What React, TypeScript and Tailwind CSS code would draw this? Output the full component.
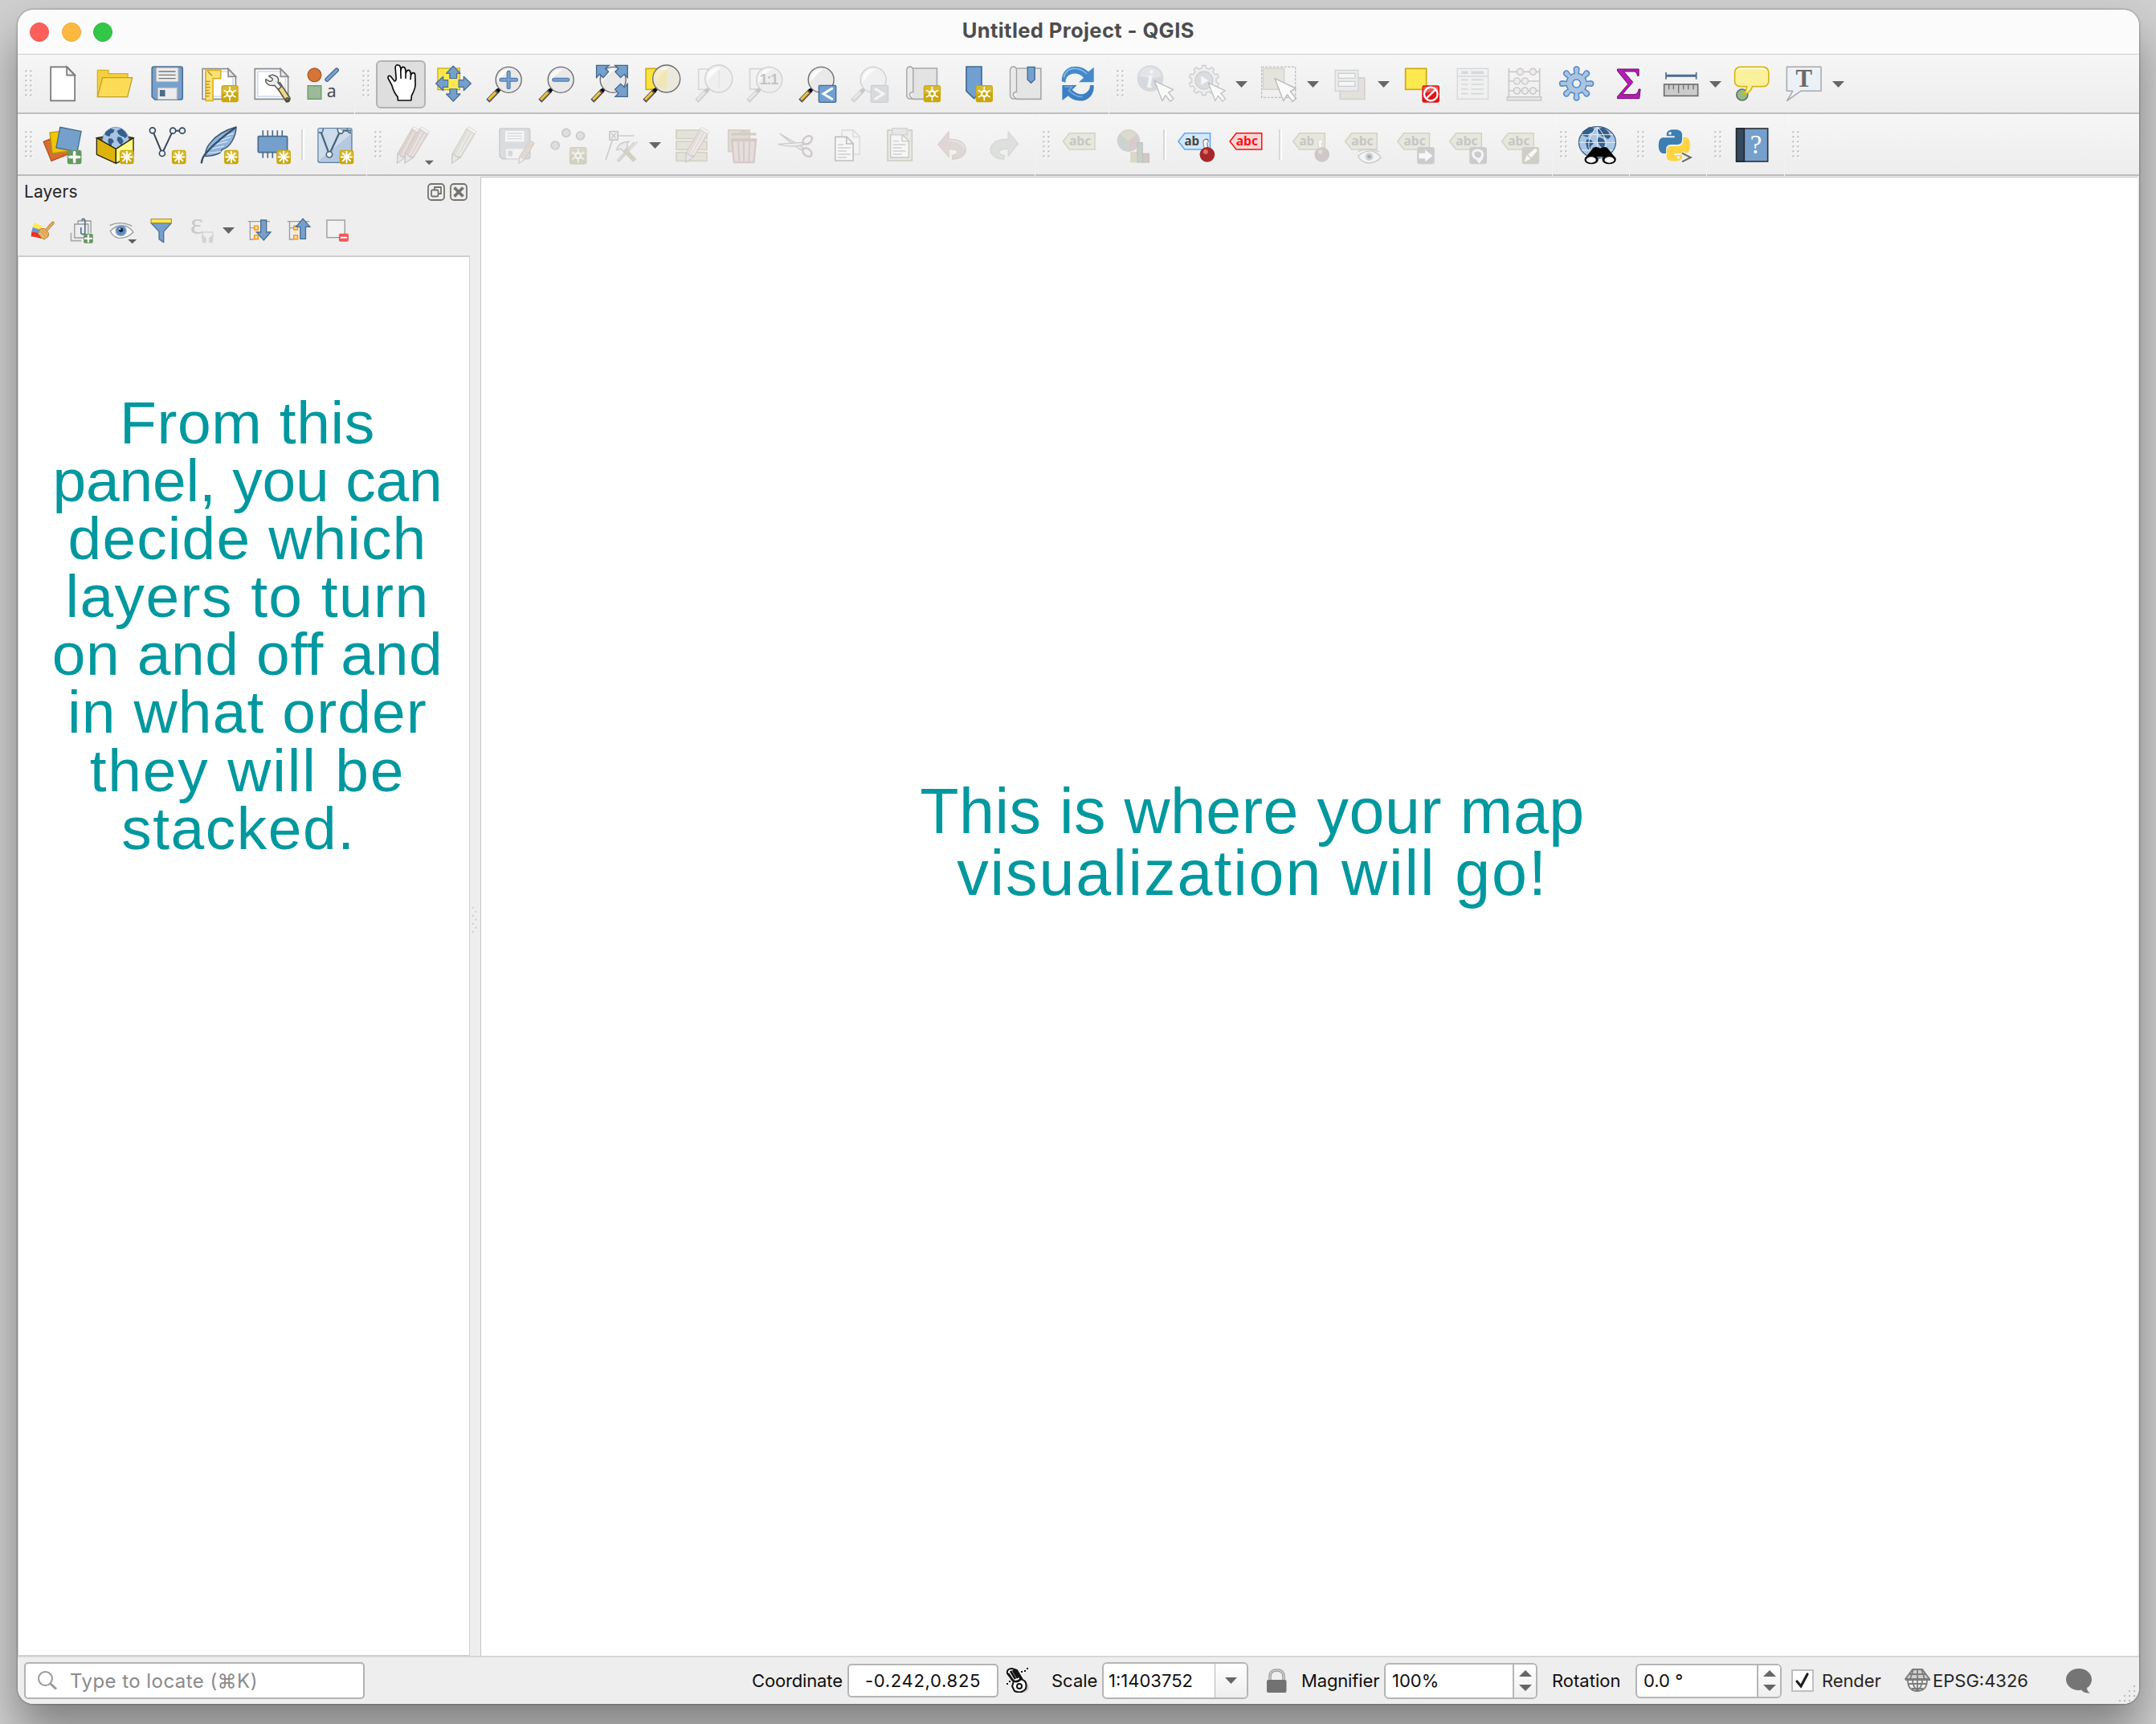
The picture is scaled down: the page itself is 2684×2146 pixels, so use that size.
import React from "react";

type Kids = { children?: React.ReactNode };
type Pt = { x: number; y: number };

/* ---------- icon frames ---------- */

function Icon({ x, y, children }: Pt & Kids) {
  return (
    <svg viewBox={`${x} ${y} 144 144`} className="block h-12 w-12 overflow-visible" fill="none">
      {children}
    </svg>
  );
}

function SmallIcon({ x, children }: { x: number } & Kids) {
  return (
    <svg viewBox={`${x} 814 96 96`} className="block h-8 w-8 overflow-visible" fill="none">
      {children}
    </svg>
  );
}

function Slot({ children }: Kids) {
  return <div className="flex w-[64.8px] shrink-0 items-center justify-center">{children}</div>;
}

function DropArrow() {
  return (
    <div className="flex w-[23.7px] shrink-0 items-center pl-[3.5px]">
      <svg viewBox="0 0 15 8" className="mt-[2px] h-2 w-[15px]">
        <path d="M0 0H15L7.5 8Z" fill="#666" />
      </svg>
    </div>
  );
}

function Grip() {
  const rows = [0, 6, 12, 18, 24, 30];
  return (
    <div className="flex w-[24.1px] shrink-0 items-center pl-[9px]">
      <svg viewBox="0 0 10 34" className="h-[34px] w-[10px]">
        {rows.map((r) => (
          <g key={r}>
            <rect x="1.6" y={r + 1.6} width="2" height="2" fill="#fff" />
            <rect x="7.6" y={r + 1.6} width="2" height="2" fill="#fff" />
            <rect x="0.4" y={r + 0.4} width="2" height="2" fill="#b8b8b8" />
            <rect x="6.4" y={r + 0.4} width="2" height="2" fill="#b8b8b8" />
          </g>
        ))}
      </svg>
    </div>
  );
}

function Divider() {
  return (
    <div className="flex w-[14.2px] shrink-0 items-center justify-center">
      <div className="h-[38px] w-[4px] border-l-2 border-[#d8d8d8] bg-white" />
    </div>
  );
}

function Group({ children, last, edge }: Kids & { last?: boolean; edge: string }) {
  return (
    <div
      className={`flex shrink-0 items-stretch bg-linear-to-b from-[#f6f6f6] to-[#ededed] ${edge} ${last ? "grow" : "mr-px pr-[6.5px]"}`}
    >
      {children}
    </div>
  );
}

/* ---------- shared icon parts ---------- */

function StarBadge({ x, y, s = 53, faded }: Pt & { s?: number; faded?: boolean }) {
  const c = s / 2;
  const r = s * 0.38;
  const big = s > 60;
  const angles = big ? [0, 60, 120] : [0, 45, 90, 135];
  return (
    <g transform={`translate(${x} ${y})`}>
      <rect width={s} height={s} rx="9" fill={faded ? "#d2cfc3" : "#caa70a"} />
      <path d={`M3 ${c}V9a6 6 0 0 1 6-6H${s - 9}a6 6 0 0 1 6 6V${c - 4}Z`} fill={faded ? "#dad8cf" : "#dcc041"} opacity=".7" />
      {angles.map((a) => (
        <path key={a} d={`M${c} ${c - r}V${c + r}`} stroke={faded ? "#f4f4f2" : "#fff"} strokeWidth={big ? 5 : 6} strokeLinecap="round" transform={`rotate(${a} ${c} ${c})`} />
      ))}
      {big && <circle cx={c} cy={c} r="10" fill={faded ? "#d2cfc3" : "#caa70a"} stroke={faded ? "#f4f4f2" : "#fff"} strokeWidth="7" />}
    </g>
  );
}

function PlusBadge({ x, y, s }: Pt & { s: number }) {
  return (
    <g transform={`translate(${x} ${y})`}>
      <rect width={s} height={s} rx={s * 0.16} fill="#64995f" />
      <path d={`M${s / 2} ${s * 0.16}V${s * 0.84}M${s * 0.16} ${s / 2}H${s * 0.84}`} stroke="#fff" strokeWidth={s * 0.2} strokeLinecap="round" />
    </g>
  );
}

function Magnifier({ x, y = 240, faded, cx = 87.5, cy = 58, r = 48, glass = "#e9e9e9" }: { x: number; y?: number; faded?: boolean; cx?: number; cy?: number; r?: number; glass?: string }) {
  return (
    <g transform={`translate(${x} ${y})`}>
      <path d="M10 137L49 97" stroke={faded ? "#cfcfcb" : "#545454"} strokeWidth="17" strokeLinecap="butt" strokeLinejoin="round" />
      <path d="M13 133L40 105" stroke={faded ? "#e6e5df" : "#f6b91a"} strokeWidth="9" />
      <path d="M11 130L37 103" stroke={faded ? "#efeeea" : "#fde08a"} strokeWidth="3" />
      {!faded && <path d="M50 87l9 9-9 10-10-10z" fill="#0b0b0b" />}
      {faded && <path d="M50 87l9 9-9 10-10-10z" fill="#c6c6c6" />}
      <circle cx={cx} cy={cy} r={r} fill={glass} stroke={faded ? "#d0d0d0" : "#6c6c6c"} strokeWidth="4" />
      <path d={`M${cx - r + 9} ${cy + 8}A${r - 9} ${r - 9} 0 0 1 ${cx + 8} ${cy - r + 9}Q${cx - 18} ${cy - 22} ${cx - r + 9} ${cy + 8}Z`} fill="#fff" opacity=".75" />
    </g>
  );
}

function Tag({ x, text = "abc", fill = "#e8e7de", stroke = "#d3d2c6", color = "#c6c6c6", y = 0 }: { x: number; text?: string; fill?: string; stroke?: string; color?: string; y?: number }) {
  return (
    <g transform={`translate(${x} ${y})`}>
      <path d="M2 528L26 497H121V558H26Z" fill={fill} stroke={stroke} strokeWidth="4.5" />
      <text x={text === "abc" ? 66 : 53} y="544" textAnchor="middle" className="font-bold" style={{ fontFamily: '"Noto Sans", sans-serif' }} fontSize="47" textLength={text === "abc" ? 82 : 56} lengthAdjust="spacingAndGlyphs" fill={color}>
        {text}
      </text>
    </g>
  );
}

function Cursor({ x, y, k = 1 }: Pt & { k?: number }) {
  return (
    <path transform={`translate(${x} ${y}) scale(${k})`} d="M0 0L70 33L52 43L71 67L59 77L41 54L29 75Z" fill="#fafafa" stroke="#bdbdbd" strokeWidth="4" strokeLinejoin="round" />
  );
}

function Pencil({ x, y, tone, tip = "#c3c3c3" }: Pt & { tone: string; tip?: string }) {
  return (
    <g transform={`translate(${x} ${y})`}>
      <path d="M2 136L5 98L58 6L90 24L36 113Z" fill={tone} stroke="#cfccc9" strokeWidth="3" />
      <path d="M2 136L5 98L20 112L36 113Z" fill="#e6e6e6" stroke={tip} strokeWidth="3" strokeLinejoin="round" />
      <path d="M20 106L66 18M30 108L78 26" stroke="#fff" strokeWidth="4" opacity=".5" />
      <path d="M58 6L65 0L93 17L90 27Z" fill="#f8f8f8" stroke="#d6d6d6" strokeWidth="3" />
    </g>
  );
}

function Page({ x }: { x: number }) {
  return (
    <g>
      <path d={`M${x} 257H${x + 96}L${x + 124} 285V370H${x}Z`} fill="#fff" stroke="#8c8c8c" strokeWidth="5" />
      <path d={`M${x + 10} 267H${x + 96}M${x + 114} 292V360H${x + 10}V267`} stroke="#c9d9f3" strokeWidth="5" />
      <path d={`M${x + 96} 257V286H${x + 124}Z`} fill="#e9e9e9" stroke="#8c8c8c" strokeWidth="5" />
    </g>
  );
}

function Land({ x, y, k, color }: Pt & { k: number; color: string }) {
  return (
    <g transform={`translate(${x} ${y}) scale(${k})`} fill={color}>
      <path d="M-36 -22L-18 -34L-4 -30L-8 -20L-18 -16L-22 -6L-30 -8L-38 -12Z" />
      <path d="M-24 0L-12 2L-6 12L-14 20L-16 34L-24 24L-28 10Z" />
      <path d="M4 -26L20 -34L34 -22L42 -8L34 0L26 -6L18 -8L10 -14Z" />
      <path d="M8 -6L20 -2L28 10L20 26L12 18L4 6Z" />
    </g>
  );
}

/* ---------- first toolbar ---------- */

function FileGroup() {
  return (
    <>
      <Grip />
      <Slot>
        <Icon x={163.5} y={240}>
          <path d="M191 250H252L281 280V376H191Z" fill="#fff" stroke="#757575" strokeWidth="5" />
          <path d="M251 250V281H281Z" fill="#ececec" stroke="#757575" strokeWidth="5" />
        </Icon>
      </Slot>
      <Slot>
        <Icon x={357.9} y={240}>
          <path d="M365 362V262H406V275H478V300" fill="#f5cf3f" stroke="#d3af2b" strokeWidth="4" />
          <path d="M365 362L384 290H495L477 362Z" fill="#fcdc57" stroke="#bf9f27" strokeWidth="4" strokeLinejoin="round" />
        </Icon>
      </Slot>
      <Slot>
        <Icon x={552.3} y={240}>
          <path d="M576 249H675Q682 249 682 256V366Q682 372 675 372H579L568 361V256Q568 249 576 249Z" fill="#76a1cd" stroke="#4d6f94" strokeWidth="5" />
          <rect x="584" y="253" width="82" height="52" rx="4" fill="#ececec" stroke="#bdbdbd" strokeWidth="3" />
          <path d="M593 267H656M593 280H656M593 293H656" stroke="#777" strokeWidth="4" />
          <rect x="590" y="328" width="71" height="43" fill="#ececec" stroke="#bdbdbd" strokeWidth="3" />
          <rect x="597" y="336" width="20" height="24" fill="#4c6b8d" />
        </Icon>
      </Slot>
      <Slot>
        <Icon x={746.7} y={240}>
          <Page x={756} />
          <path d="M768 262H824V293H795V376H768Z" fill="#fbe27a" stroke="#dcb21c" strokeWidth="5" />
          <path d="M768 304H785M768 315H781M768 326H785M768 337H781M768 348H785M768 359H781M775 266L792 283" stroke="#b78f0e" strokeWidth="4" />
          <StarBadge x={826} y={318} s={64} />
        </Icon>
      </Slot>
      <Slot>
        <Icon x={941.1} y={240}>
          <Page x={951} />
          <path d="M1028 318L1044 308L1082 366Q1083 380 1069 381Z" fill="#f0d788" stroke="#5b5748" strokeWidth="5" strokeLinejoin="round" />
          <path d="M1003 284Q1020 274 1035 288Q1042 297 1037 308L1050 324L1038 334L1024 319Q1003 323 993 308Q990 302 992 296L1006 304Q1018 304 1017 294Z" fill="#eee" stroke="#5a5a5a" strokeWidth="4.5" strokeLinejoin="round" />
          <circle cx="1072" cy="371" r="6" fill="#777" stroke="#222" strokeWidth="3" />
        </Icon>
      </Slot>
      <Slot>
        <Icon x={1135.5} y={240}>
          <circle cx="1176" cy="280" r="25" fill="#d87438" stroke="#ad5a27" strokeWidth="4" />
          <path d="M1223 297L1259 262" stroke="#476c93" strokeWidth="17" strokeLinecap="round" />
          <path d="M1223 297L1259 262" stroke="#7aa4d0" strokeWidth="9" strokeLinecap="round" />
          <rect x="1151" y="320" width="50" height="50" fill="#9cb99a" stroke="#659b62" strokeWidth="4" />
          <text x="1222" y="363" fontSize="64" style={{ fontFamily: '"Noto Sans", sans-serif' }} fill="#4a4a4a">a</text>
        </Icon>
      </Slot>
    </>
  );
}

const arrow = "M0 0L26 27H13V46H-13V27H-26Z";

function NavGroup() {
  return (
    <>
      <Grip />
      <Slot>
        <div className="mt-[2px] flex h-[60px] w-[62px] items-center justify-center rounded-[6px] border-2 border-[#b3b3b3] bg-[#dedede]">
          <Icon x={104.7} y={243}>
            <path d="M166 375L165 362Q150 345 143 318L129 292Q128 280 138 284L153 303Q160 303 159 290L156 252Q158 240 166 243Q173 243 175 251L177 262Q178 250 186 250Q194 251 194 262L196 272Q198 261 206 262Q213 264 213 274L214 282Q217 271 224 272Q231 274 230 284L231 318Q229 335 217 357L215 375Z" fill="#fff" stroke="#0c0c0c" strokeWidth="5" strokeLinejoin="round" />
            <path d="M176 260L177 292M195 270L195 292M214 282L213 296" stroke="#0c0c0c" strokeWidth="5" strokeLinecap="round" />
          </Icon>
        </div>
      </Slot>
      <Slot>
        <Icon x={299.1} y={240}>
          <rect x="314" y="255" width="82" height="80" fill="#fce94f" stroke="#d0aa12" strokeWidth="4" />
          <g fill="#76a0cc" stroke="#4a6e94" strokeWidth="4" strokeLinejoin="round">
            <path transform="translate(372 247)" d={arrow} />
            <path transform="translate(372 378) rotate(180)" d={arrow} />
            <path transform="translate(307 312) rotate(-90)" d={arrow} />
            <path transform="translate(438 312) rotate(90)" d={arrow} />
          </g>
          <path d="M354 295h36v36h-36z" fill="#fce94f" />
        </Icon>
      </Slot>
      <Slot>
        <Icon x={493.5} y={240}>
          <Magnifier x={493.5} />
          <path d="M581 270V326M553 298H609" stroke="#4c77a6" strokeWidth="15" strokeLinecap="round" />
          <path d="M581 270V326M553 298H609" stroke="#74a1d1" strokeWidth="9" strokeLinecap="round" />
        </Icon>
      </Slot>
      <Slot>
        <Icon x={687.9} y={240}>
          <Magnifier x={687.9} />
          <path d="M750 298H801" stroke="#4c77a6" strokeWidth="15" strokeLinecap="round" />
          <path d="M750 298H801" stroke="#74a1d1" strokeWidth="9" strokeLinecap="round" />
        </Icon>
      </Slot>
      <Slot>
        <Icon x={882.3} y={240}>
          <Magnifier x={882.3} />
          <g fill="#76a0cc" stroke="#41678f" strokeWidth="4" strokeLinejoin="miter">
            <path d="M908 244H955L941 256L953 268L933 290L920 277L908 290Z" />
            <path d="M1024 244V290L1012 277L998 290L978 268L990 256L977 244Z" />
            <path d="M1024 361H978L990 348L977 334L998 313L1012 326L1024 313Z" />
          </g>
        </Icon>
      </Slot>
      <Slot>
        <Icon x={1076.7} y={240}>
          <rect x="1092" y="256" width="80" height="78" fill="#fbe33c" stroke="#d3ac0d" strokeWidth="5" />
          <Magnifier x={1076.7} cx={92} cy={54} r={51} glass="#ebe9dc" />
          <path d="M1140 260H1172V330L1150 332Q1128 320 1124 294Q1126 272 1140 260Z" fill="#f2e69f" opacity=".6" />
        </Icon>
      </Slot>
      <Slot>
        <Icon x={-48.9} y={240}>
          <rect x="-32" y="258" width="78" height="76" stroke="#d8d8d8" strokeWidth="5" />
          <Magnifier x={-48.9} cx={92} cy={54} r={51} faded glass="#efefef" />
          <path d="M45 262V328" stroke="#e2e2e2" strokeWidth="4" />
        </Icon>
      </Slot>
      <Slot>
        <Icon x={145.5} y={240}>
          <rect x="162" y="257" width="80" height="76" stroke="#d4d4d4" strokeWidth="5" />
          <Magnifier x={145.5} cx={89} faded glass="#eeeeee" />
          <text x="234" y="316" textAnchor="middle" fontSize="54" className="font-bold" style={{ fontFamily: '"Liberation Sans", sans-serif' }} textLength="70" fill="#c2c2c2">1:1</text>
        </Icon>
      </Slot>
      <Slot>
        <Icon x={339.9} y={240}>
          <Magnifier x={339.9} />
          <rect x="419" y="319" width="64" height="63" rx="4" fill="#709fd0" stroke="#436a94" strokeWidth="4" />
          <path d="M468 331L436 350L468 370" stroke="#fff" strokeWidth="9" strokeLinecap="round" />
        </Icon>
      </Slot>
      <Slot>
        <Icon x={534.3} y={240}>
          <Magnifier x={534.3} faded glass="#f0f0f0" />
          <rect x="613" y="319" width="64" height="63" rx="4" fill="#d8dbde" stroke="#cccfd2" strokeWidth="4" />
          <path d="M630 332L660 350L630 369" stroke="#f5f5f5" strokeWidth="9" strokeLinecap="round" />
        </Icon>
      </Slot>
      <Slot>
        <Icon x={728.7} y={240}>
          <path d="M768 255H859V370H768" fill="#e3e3e3" stroke="#a9a9a9" strokeWidth="5" />
          <path d="M746 262Q747 249 758 249Q769 249 770 262V344Q759 342 757 353Q757 360 768 369Q748 372 746 358Z" fill="#e9e9e9" stroke="#a3a3a3" strokeWidth="4" />
          <StarBadge x={809} y={318} s={64} />
        </Icon>
      </Slot>
      <Slot>
        <Icon x={923.1} y={240}>
          <path d="M968 249H1025V340L997 368L968 340Z" fill="#709fd0" stroke="#3f6a97" strokeWidth="5" />
          <StarBadge x={1003} y={318} s={64} />
        </Icon>
      </Slot>
      <Slot>
        <Icon x={1117.5} y={240}>
          <path d="M1158 255H1249V370H1158" fill="#e5e5e5" stroke="#a9a9a9" strokeWidth="5" />
          <path d="M1134 262Q1136 249 1146 249Q1157 249 1158 262V344Q1147 342 1145 353Q1145 360 1158 369Q1136 372 1134 358Z" fill="#e9e9e9" stroke="#a3a3a3" strokeWidth="4" />
          <path d="M1199 250H1226V297L1212 310L1199 297Z" fill="#74a0cf" stroke="#45698f" strokeWidth="4" />
        </Icon>
      </Slot>
      <Slot>
        <Icon x={1311.9} y={240}>
          <path d="M1326 304Q1325 263 1362 250Q1400 243 1426 268L1446 251V307H1390L1408 290Q1386 269 1362 277Q1340 284 1340 308Z" fill="#4389cc" />
          <path d="M1334 289Q1338 262 1368 256Q1396 253 1420 276" stroke="#8fbbe4" strokeWidth="5" />
          <path d="M1446 318Q1448 361 1411 375Q1374 382 1350 358L1328 375V318H1383L1365 335Q1388 357 1410 350Q1432 341 1432 318Z" fill="#3a7fc3" />
          <path d="M1336 324H1364L1352 338Q1376 362 1404 362" stroke="#76abdd" strokeWidth="5" />
        </Icon>
      </Slot>
    </>
  );
}

function GearShape({ cx, cy, r, n, tooth, fill, stroke, w }: { cx: number; cy: number; r: number; n: number; tooth: number; fill: string; stroke: string; w: number }) {
  const pts: string[] = [];
  for (let i = 0; i < n; i++) {
    const a = (i / n) * Math.PI * 2 - Math.PI / 2;
    const d = Math.PI / n;
    const p = (ang: number, rad: number) => `${(cx + Math.cos(ang) * rad).toFixed(1)} ${(cy + Math.sin(ang) * rad).toFixed(1)}`;
    pts.push(p(a - d * 0.55, r), p(a - d * 0.38, r + tooth), p(a + d * 0.38, r + tooth), p(a + d * 0.55, r));
  }
  return <path d={`M${pts.join("L")}Z`} fill={fill} stroke={stroke} strokeWidth={w} strokeLinejoin="round" />;
}

function AttributeGroup() {
  return (
    <>
      <Grip />
      <Slot>
        <Icon x={221.1} y={240}>
          <circle cx="275" cy="293" r="49" fill="#d5d9dd" />
          <path d="M233 283Q240 250 275 250Q310 252 317 284Q276 300 233 283Z" fill="#e2e5e8" />
          <text x="274" y="326" textAnchor="middle" fontSize="92" className="font-bold italic" style={{ fontFamily: '"Liberation Serif", serif' }} fill="#f4f4f4">i</text>
          <Cursor x={291} y={302} />
        </Icon>
      </Slot>
      <Slot>
        <Icon x={415.5} y={240}>
          <GearShape cx={478} cy={300} r={46} n={10} tooth={10} fill="#efefef" stroke="#cbcbcb" w={4} />
          <circle cx="478" cy="300" r="33" fill="#d9dde1" stroke="#cdd0d3" strokeWidth="4" />
          <path d="M467 284V317L495 301Z" fill="#f6f6f6" />
          <Cursor x={494} y={309} k={0.9} />
        </Icon>
      </Slot>
      <DropArrow />
      <Slot>
        <Icon x={681} y={240}>
          <rect x="692" y="250" width="126" height="114" stroke="#bdbdbd" strokeWidth="4" strokeDasharray="9 5" />
          <rect x="697" y="256" width="79" height="78" fill="#e5e3de" stroke="#d4d1c9" strokeWidth="4" />
          <Cursor x={741} y={293} k={1.12} />
        </Icon>
      </Slot>
      <DropArrow />
      <Slot>
        <Icon x={946.5} y={240}>
          <rect x="986" y="291" width="92" height="79" fill="#e3e1dc" stroke="#d4d1c9" strokeWidth="5" />
          <rect x="968" y="262" width="86" height="78" fill="#e9eaeb" stroke="#cfd2d4" strokeWidth="4" />
          <rect x="980" y="274" width="62" height="18" fill="#f6f6f6" stroke="#cccfd1" strokeWidth="4" />
          <rect x="980" y="304" width="62" height="18" fill="#f6f6f6" stroke="#cccfd1" strokeWidth="4" />
        </Icon>
      </Slot>
      <DropArrow />
      <Slot>
        <Icon x={1212} y={240}>
          <rect x="1229" y="256" width="78" height="78" fill="#fce94f" stroke="#cfa80d" strokeWidth="5" />
          <rect x="1291" y="319" width="65" height="64" rx="7" fill="#dc1717" />
          <path d="M1295 349V328Q1295 323 1300 323H1347Q1352 323 1352 328V340Z" fill="#e85b5b" />
          <circle cx="1324" cy="351" r="25" stroke="#fff" strokeWidth="7" />
          <path d="M1307 367L1341 335" stroke="#fff" strokeWidth="7" />
        </Icon>
      </Slot>
      <Slot>
        <Icon x={26.4} y={240}>
          <rect x="42" y="256" width="115" height="114" fill="#f0f0f0" stroke="#d4d8da" strokeWidth="4" />
          <path d="M42 285H157" stroke="#d4d8da" strokeWidth="5" />
          <path d="M57 271H82M94 271H140" stroke="#d6d9db" strokeWidth="11" />
          <path d="M57 298H82M94 298H140M57 315H82M94 315H140M57 333H82M94 333H140M57 350H82M94 350H140" stroke="#d3d6d8" strokeWidth="5" />
        </Icon>
      </Slot>
      <Slot>
        <Icon x={220.8} y={240}>
          <path d="M237 254V362M352 254V362M237 268H352M237 303H352M237 339H352" stroke="#c9c9c9" strokeWidth="5" />
          <rect x="231" y="362" width="127" height="13" fill="#e6e6e6" stroke="#c5c5c5" strokeWidth="4" />
          <g fill="#ececec" strokeWidth="5">
            <g stroke="#d3c8c8"><circle cx="279" cy="268" r="12" /><circle cx="327" cy="268" r="12" /></g>
            <g stroke="#cdd0ca"><circle cx="267" cy="303" r="12" /><circle cx="297" cy="303" r="12" /></g>
            <g stroke="#c9c9c9"><circle cx="267" cy="339" r="12" /><circle cx="297" cy="339" r="12" /><circle cx="327" cy="339" r="12" /></g>
          </g>
        </Icon>
      </Slot>
      <Slot>
        <Icon x={415.2} y={240}>
          <g fill="#aac3e0" stroke="#4f8bc9" strokeWidth="4.5">
            {[0, 45, 90, 135, 180, 225, 270, 315].map((a) => (
              <path key={a} transform={`rotate(${a} 489 312)`} d="M482 278L479 258Q480 249 489 249Q498 249 499 258L496 278Z" />
            ))}
            <circle cx="489" cy="312" r="38" />
          </g>
          {[0, 45, 90, 135, 180, 225, 270, 315].map((a) => (
            <path key={a} transform={`rotate(${a} 489 312)`} d="M484 282V266H494V282Z" fill="#aac3e0" />
          ))}
          <circle cx="489" cy="312" r="15" fill="#f2f2f2" stroke="#4f8bc9" strokeWidth="5" />
        </Icon>
      </Slot>
      <Slot>
        <Icon x={609.6} y={240}>
          <path d="M641 258H721V283H716Q714 267 702 267H665L699 307L659 353H702Q718 353 721 333H727L723 368H641V361L681 314L641 265Z" fill="#b61cb6" stroke="#6b126b" strokeWidth="3" />
        </Icon>
      </Slot>
      <Slot>
        <Icon x={804} y={240}>
          <path d="M822 283H935" stroke="#4d6d8d" strokeWidth="9" />
          <path d="M822 270V296M935 270V296" stroke="#4d6d8d" strokeWidth="5" />
          <rect x="815" y="315" width="126" height="43" fill="#cbcbcb" stroke="#6e6e6e" strokeWidth="5" />
          <path d="M833 317V334M850 317V334M869 317V347M887 317V334M905 317V334M924 317V334" stroke="#6e6e6e" strokeWidth="4" />
        </Icon>
      </Slot>
      <DropArrow />
      <Slot>
        <Icon x={1069.5} y={240}>
          <circle cx="1108" cy="354" r="21" fill="#8cc08b" stroke="#6b6f6a" strokeWidth="5" />
          <path d="M1100 250H1187Q1207 252 1207 272V302Q1206 322 1187 323H1146Q1140 346 1110 354Q1126 340 1125 323H1100Q1081 322 1080 302V272Q1081 251 1100 250Z" fill="#fbf09b" stroke="#d8b70e" strokeWidth="5" strokeLinejoin="round" />
          <path d="M1092 262Q1096 256 1104 256H1184Q1194 257 1197 264" stroke="#fffbe0" strokeWidth="5" />
        </Icon>
      </Slot>
      <Slot>
        <Icon x={1263.9} y={240}>
          <path d="M1274 250H1402V340H1326L1275 376L1296 340H1274Z" fill="#ebf1f7" stroke="#a8a8a8" strokeWidth="4.5" strokeLinejoin="round" />
          <text x="1338" y="325" textAnchor="middle" fontSize="92" className="font-bold" style={{ fontFamily: '"Liberation Serif", serif' }} fill="#6a6a6a">T</text>
        </Icon>
      </Slot>
      <DropArrow />
    </>
  );
}

/* ---------- second toolbar ---------- */

function LayerGroup() {
  return (
    <>
      <Grip />
      <Slot>
        <Icon x={163.5} y={468}>
          <rect x="176" y="512" width="76" height="78" fill="#d76d33" stroke="#b0531f" strokeWidth="4" transform="rotate(-22 214 551)" />
          <rect x="192" y="490" width="76" height="78" fill="#edc704" stroke="#b79700" strokeWidth="4" transform="rotate(-7 230 529)" />
          <rect x="218" y="482" width="80" height="78" fill="#76a0cc" stroke="#476b92" strokeWidth="4" transform="rotate(11 258 521)" />
          <PlusBadge x={253} y={560} s={53} />
        </Icon>
      </Slot>
      <Slot>
        <Icon x={357.9} y={468}>
          <path d="M362 515L400 508H465L499 515L434 556Z" fill="#6b5a14" stroke="#222" strokeWidth="4" />
          <circle cx="433" cy="524" r="49" fill="#a9c5e4" stroke="#7d9fc3" strokeWidth="3" />
          <Land x={433} y={516} k={1.05} color="#335f8c" />
          <path d="M362 515L434 556V610L362 577Z" fill="#deb30c" stroke="#2a2408" strokeWidth="4" strokeLinejoin="round" />
          <path d="M499 515L434 556V610L499 577Z" fill="#fffd84" stroke="#2a2408" strokeWidth="4" strokeLinejoin="round" />
          <StarBadge x={448} y={560} />
        </Icon>
      </Slot>
      <Slot>
        <Icon x={552.3} y={468}>
          <path d="M570 487L606 573L646 488H681" stroke="#34495e" strokeWidth="6" />
          <g fill="#f3f3f3" stroke="#34495e" strokeWidth="5">
            <circle cx="570" cy="487" r="10.5" /><circle cx="606" cy="573" r="10.5" /><circle cx="646" cy="488" r="10.5" /><circle cx="681" cy="488" r="10.5" />
          </g>
          <StarBadge x={642} y={560} />
        </Icon>
      </Slot>
      <Slot>
        <Icon x={746.7} y={468}>
          <path d="M768 584Q763 558 786 532Q818 492 882 474Q882 500 866 528Q852 552 830 558L820 572Q800 582 768 584Z" fill="#8fb3da" stroke="#34506c" strokeWidth="4" strokeLinejoin="round" />
          <path d="M776 572L826 566M784 556L836 546M794 542L850 528M806 530L862 512M822 514L872 498" stroke="#d4e3f3" strokeWidth="4" />
          <path d="M752 610Q754 584 778 562Q816 520 880 476" stroke="#34506c" strokeWidth="7" />
          <StarBadge x={837} y={560} />
        </Icon>
      </Slot>
      <Slot>
        <Icon x={941.1} y={468}>
          <path d="M981 487V590M999 487V590M1017 487V590M1035 487V590M1053 487V590" stroke="#4a6c90" strokeWidth="5" />
          <rect x="963" y="509" width="109" height="60" rx="4" fill="#76a0cc" stroke="#4a6c90" strokeWidth="5" />
          <StarBadge x={1032} y={560} />
        </Icon>
      </Slot>
      <Divider />
      <Slot>
        <Icon x={1178.1} y={468}>
          <rect x="1187" y="479" width="126" height="128" rx="6" fill="#b4c8e1" stroke="#5c7f9f" strokeWidth="4" />
          <path d="M1189 481H1311V500L1189 600Z" fill="#d5e0ee" opacity=".8" />
          <path d="M1196 488L1229 577L1270 488H1310" stroke="#47687f" strokeWidth="7" />
          <path d="M1189 494Q1206 500 1206 481M1260 481Q1260 499 1272 499Q1282 498 1281 488M1296 481Q1298 497 1311 497" stroke="#47687f" strokeWidth="5" fill="#f3f3f3" />
          <circle cx="1229" cy="577" r="11" fill="#fff" stroke="#47687f" strokeWidth="5" />
          <StarBadge x={1267} y={560} />
        </Icon>
      </Slot>
    </>
  );
}

function EditGroup() {
  return (
    <>
      <Grip />
      <Slot>
        <Icon x={147.3} y={468}>
          <Pencil x={161} y={474} tone="#dcd2cf" />
          <Pencil x={190} y={474} tone="#ded5d2" />
          <path d="M267 599H300L283 616Z" fill="#666" />
        </Icon>
      </Slot>
      <Slot>
        <Icon x={341.7} y={468}>
          <Pencil x={365} y={474} tone="#e0dfd8" />
        </Icon>
      </Slot>
      <Slot>
        <Icon x={536.1} y={468}>
          <path d="M552 480H651Q658 480 658 487V586Q658 593 651 593H555L545 583V487Q545 480 552 480Z" fill="#dadcdf" stroke="#cbced1" strokeWidth="5" />
          <rect x="566" y="489" width="71" height="40" fill="#f6f6f6" />
          <path d="M573 498H629M573 508H629M573 518H629" stroke="#dadada" strokeWidth="4" />
          <rect x="569" y="556" width="69" height="36" fill="#f3f3f3" />
          <rect x="577" y="563" width="16" height="20" fill="#d5d7da" />
          <path d="M616 611L620 583L658 525L675 534L638 597Z" fill="#e2d8d3" stroke="#d2cac6" strokeWidth="3" />
          <path d="M616 611L620 583L638 597Z" fill="#ececec" stroke="#cfcfcf" strokeWidth="3" />
        </Icon>
      </Slot>
      <Slot>
        <Icon x={730.5} y={468}>
          <g fill="#dde0dd" stroke="#c7c9c8" strokeWidth="5">
            <circle cx="796" cy="496" r="15" /><circle cx="849" cy="507" r="15" /><circle cx="755" cy="543" r="15" />
          </g>
          <StarBadge x={808} y={549} s={65} faded />
        </Icon>
      </Slot>
      <Slot>
        <Icon x={924.9} y={468}>
          <path d="M990 507H1049M968 523L943 597" stroke="#cbcbcb" strokeWidth="5" />
          <rect x="958" y="491" width="30" height="31" fill="#f0f0f0" stroke="#c6c6c6" strokeWidth="5" />
          <path d="M964 498L981 516M981 498L964 516" stroke="#c6c6c6" strokeWidth="4" />
          <path d="M988 603L1052 533" stroke="#d8d6cf" strokeWidth="13" />
          <path d="M1034 556L1060 532" stroke="#dedede" strokeWidth="8" strokeLinecap="round" />
          <path d="M1006 552L1052 600" stroke="#d3d0c6" strokeWidth="17" />
          <path d="M984 560Q990 536 1014 531L1030 529Q1018 538 1026 548L1010 566L1000 556Z" fill="#ebebeb" stroke="#cbcbcb" strokeWidth="4" />
        </Icon>
      </Slot>
      <DropArrow />
      <Slot>
        <Icon x={1190.4} y={468}>
          <g fill="#e4e2d9" stroke="#d3d1c6" strokeWidth="5">
            <rect x="1205" y="486" width="114" height="32" /><rect x="1205" y="528" width="114" height="31" /><rect x="1205" y="569" width="114" height="32" />
          </g>
          <g transform="translate(1238 475) scale(.96)">
            <Pencil x={0} y={0} tone="#e4dcdc" />
          </g>
        </Icon>
      </Slot>
      <Slot>
        <Icon x={64.8} y={468}>
          <rect x="79" y="486" width="79" height="80" fill="#e0ddd5" stroke="#d2cfc4" strokeWidth="5" />
          <path d="M92 520H182L174 606H100Z" fill="#e6dedd" stroke="#d5c9c8" strokeWidth="7" strokeLinejoin="round" />
          <path d="M90 501H183" stroke="#d5c9c8" strokeWidth="9" />
          <path d="M122 497Q137 484 152 497" stroke="#d5c9c8" strokeWidth="5" />
          <path d="M92 524H182" stroke="#d5c9c8" strokeWidth="10" />
          <path d="M116 530L120 602M137 530V602M159 530L155 602" stroke="#d5c9c8" strokeWidth="6" />
        </Icon>
      </Slot>
      <Slot>
        <Icon x={259.2} y={468}>
          <path d="M274 499L362 553L352 560Q310 532 274 499Z" fill="#eee" stroke="#cbcbcb" strokeWidth="4" />
          <path d="M267 538L356 532L362 541Q310 553 267 538Z" fill="#eee" stroke="#cbcbcb" strokeWidth="4" />
          <ellipse cx="377" cy="523" rx="19" ry="13" transform="rotate(-38 377 523)" stroke="#d0c7c7" strokeWidth="7" />
          <ellipse cx="376" cy="569" rx="19" ry="13" transform="rotate(42 376 569)" stroke="#d0c7c7" strokeWidth="7" />
        </Icon>
      </Slot>
      <Slot>
        <Icon x={453.6} y={468}>
          <path d="M505 486H547L571 510V576H505Z" fill="#f3f3f3" stroke="#dadada" strokeWidth="4" />
          <path d="M546 486V511H571" stroke="#dadada" strokeWidth="4" />
          <path d="M480 511H523L547 536V600H480Z" fill="#f6f6f6" stroke="#c0c0c0" strokeWidth="5" />
          <path d="M522 511V537H547" stroke="#c0c0c0" strokeWidth="5" />
          <path d="M490 540H511M490 552H537M490 564H522M490 576H537M490 588H522" stroke="#cecece" strokeWidth="4" />
        </Icon>
      </Slot>
      <Slot>
        <Icon x={648} y={468}>
          <rect x="675" y="486" width="91" height="114" fill="#e9e8e2" stroke="#d0cfc6" strokeWidth="5" />
          <path d="M686 503H730L754 526V588H686Z" fill="#f6f6f6" stroke="#c6c6c6" strokeWidth="4" />
          <path d="M729 503V527H754" stroke="#c6c6c6" strokeWidth="4" />
          <rect x="692" y="479" width="56" height="24" fill="#e6e6e6" stroke="#d3d3d3" strokeWidth="4" />
          <path d="M695 527H717M695 540H742M695 552H728M695 564H742M695 576H728" stroke="#cecece" strokeWidth="4" />
        </Icon>
      </Slot>
      <Slot>
        <Icon x={842.4} y={468}>
          <path d="M862 539L903 491V519Q966 520 967 558Q964 594 916 595V580Q934 578 934 566Q934 556 903 557V587Z" fill="#dfd7d3" stroke="#d6cdc9" strokeWidth="3" />
          <path d="M903 525Q956 526 961 556" stroke="#eae5e2" strokeWidth="4" />
        </Icon>
      </Slot>
      <Slot>
        <Icon x={1036.8} y={468}>
          <path d="M1162 537L1124 491V519Q1060 520 1057 558Q1060 594 1109 595V580Q1091 578 1090 567Q1092 556 1124 556V584Z" fill="#dde0dc" stroke="#cfd4cf" strokeWidth="3" />
        </Icon>
      </Slot>
    </>
  );
}

function EyeShape({ x, y }: Pt) {
  return (
    <g transform={`translate(${x} ${y})`}>
      <path d="M-42 0Q-14 -24 14 -18Q34 -10 44 5Q24 26 -4 26Q-32 22 -42 0Z" fill="#f4f4f4" stroke="#c9c9c9" strokeWidth="4" />
      <circle cx="0" cy="2" r="15" fill="#cfd2d5" />
      <circle cx="0" cy="2" r="7" fill="#a9abad" />
      <path d="M-42 -18Q-4 -34 38 -16" stroke="#c9c9c9" strokeWidth="4" />
    </g>
  );
}

function LabelGroup() {
  return (
    <>
      <Grip />
      <Slot>
        <Icon x={1326} y={468}>
          <Tag x={1328} />
        </Icon>
      </Slot>
      <Slot>
        <Icon x={140.4} y={468}>
          <rect x="201" y="567" width="26" height="40" fill="#dbd7c9" />
          <rect x="248" y="574" width="22" height="32" fill="#d3c8c8" stroke="#c9bfbf" strokeWidth="4" />
          <path d="M194 525L163 497A41 41 0 0 0 194 566Z" fill="#cbd4cf" />
          <path d="M194 525L225 497A41 41 0 0 1 194 566Z" fill="#d9cccc" />
          <path d="M194 525L163 497A41 41 0 0 1 225 497Z" fill="#dddacd" />
          <circle cx="194" cy="525" r="40" stroke="#d0d3cd" strokeWidth="3" />
          <rect x="227" y="533" width="19" height="73" fill="#c9d0cb" stroke="#bfc6c1" strokeWidth="4" />
        </Icon>
      </Slot>
      <Divider />
      <Slot>
        <Icon x={377.4} y={468}>
          <Tag x={378} text="ab" fill="#d3e8fc" stroke="#5aa9f6" color="#454545" />
          <path d="M484 552L480 533Q479 526 485 526" stroke="#777" strokeWidth="17" strokeLinecap="round" />
          <path d="M484 556L480 533Q479 526 485 528" stroke="#f8f8f8" strokeWidth="11" strokeLinecap="round" />
          <circle cx="488" cy="577" r="28" fill="#a62828" />
          <circle cx="482" cy="567" r="9" fill="#e06f70" />
        </Icon>
      </Slot>
      <Slot>
        <Icon x={571.8} y={468}>
          <Tag x={573} fill="#fdd8d8" stroke="#fa0d0d" color="#fa1414" />
        </Icon>
      </Slot>
      <Divider />
      <Slot>
        <Icon x={808.8} y={468}>
          <Tag x={809} text="ab" />
          <path d="M915 556L911 533Q910 526 916 528" stroke="#d6d6d6" strokeWidth="17" strokeLinecap="round" />
          <path d="M915 558L911 533Q910 526 916 528" stroke="#f6f6f6" strokeWidth="11" strokeLinecap="round" />
          <circle cx="919" cy="577" r="28" fill="#d0c8c8" />
          <circle cx="913" cy="567" r="8" fill="#e3dcdc" />
        </Icon>
      </Slot>
      <Slot>
        <Icon x={1003.2} y={468}>
          <Tag x={1003} />
          <EyeShape x={1095} y={583} />
        </Icon>
      </Slot>
      <Slot>
        <Icon x={1197.6} y={468}>
          <Tag x={1198} />
          <rect x="1273" y="549" width="65" height="64" rx="9" fill="#cacccd" />
          <path d="M1280 572H1303V559L1331 582L1303 604V592H1280Z" fill="#f7f7f7" />
        </Icon>
      </Slot>
      <Slot>
        <Icon x={12} y={468}>
          <Tag x={12} />
          <rect x="88" y="549" width="65" height="64" rx="9" fill="#cacccd" />
          <path d="M112 592Q95 578 104 566Q118 556 133 566Q143 580 128 594" stroke="#f5f5f5" strokeWidth="9" />
          <path d="M108 588L140 590L124 611Z" fill="#f5f5f5" />
        </Icon>
      </Slot>
      <Slot>
        <Icon x={206.4} y={468}>
          <Tag x={206} />
          <rect x="283" y="549" width="65" height="64" rx="9" fill="#d0cfc6" />
          <path d="M292 605L300 583L330 556Q340 554 340 564L314 594Z" fill="#f7f7f7" />
          <path d="M304 578L318 592" stroke="#d0cfc6" strokeWidth="4" />
        </Icon>
      </Slot>
    </>
  );
}

function SearchGroup() {
  return (
    <>
      <Grip />
      <Slot>
        <Icon x={495.6} y={468}>
          <ellipse cx="566" cy="532" rx="69" ry="59" fill="#a9c6e4" stroke="#3b6187" strokeWidth="4" />
          <Land x={560} y={520} k={1.35} color="#345f8b" />
          <path d="M498 532H634M508 503H624M508 561H624M566 474V590M566 474Q510 530 552 590M566 474Q622 530 580 590" stroke="#e6f0f9" strokeWidth="3" />
          <path d="M519 592L546 558Q551 548 562 549Q572 549 577 554Q582 549 592 549Q603 548 608 558L636 592L610 600L588 586H566L544 600Z" fill="#050505" />
          <ellipse cx="544" cy="596" rx="26" ry="17" fill="#050505" />
          <ellipse cx="610" cy="596" rx="26" ry="17" fill="#050505" />
          <ellipse cx="543" cy="597" rx="18" ry="11" fill="#f7f7f7" />
          <ellipse cx="611" cy="597" rx="18" ry="11" fill="#f7f7f7" />
        </Icon>
      </Slot>
    </>
  );
}

function PythonGroup() {
  return (
    <>
      <Grip />
      <Slot>
        <Icon x={784.8} y={468}>
          <path d="M826 501Q826 484 854 484Q883 484 884 501V523Q883 540 867 540H841Q824 542 824 558V573H812Q796 571 796 544Q796 515 812 514H856V508H826Z" fill="#3d7eb3" />
          <circle cx="839" cy="498" r="5.5" fill="#fff" />
          <path d="M884 586Q884 602 855 602Q827 602 826 586V563Q827 546 842 545H870Q886 543 888 528V513H899Q914 516 914 543Q914 570 899 573H855V579H884Z" fill="#fed541" />
          <circle cx="870" cy="588" r="5.5" fill="#fff" />
          <path d="M884 572L917 588L884 604" stroke="#f0f0f0" strokeWidth="14" />
          <path d="M884 572L916 588L884 604" stroke="#686868" strokeWidth="6" />
        </Icon>
      </Slot>
    </>
  );
}

function HelpGroup() {
  return (
    <>
      <Grip />
      <Slot>
        <Icon x={1074} y={468}>
          <rect x="1085" y="480" width="117" height="123" fill="#76a0cc" stroke="#2f3640" strokeWidth="5" />
          <rect x="1085" y="480" width="29" height="123" fill="#35495c" stroke="#23282f" strokeWidth="5" />
          <text x="1158" y="574" textAnchor="middle" fontSize="98" style={{ fontFamily: '"Liberation Serif", serif' }} fill="#fff">?</text>
        </Icon>
      </Slot>
    </>
  );
}

/* ---------- layers panel ---------- */

function LayerTools() {
  return (
    <div className="flex h-[44px] items-center pl-[6.4px]">
      <div className="flex w-[49.2px] justify-center">
        <SmallIcon x={111}>
          <path d="M128 832L160 846L146 858L122 850Z" fill="#fce94f" />
          <path d="M122 850L150 858L140 874L118 866Z" fill="#7096cb" />
          <path d="M118 866L144 872L156 893Q134 886 116 884Z" fill="#ee2f24" />
          <path d="M172 862L198 833" stroke="#b97a2a" strokeWidth="11" strokeLinecap="round" />
          <path d="M172 862L198 833" stroke="#eab05a" strokeWidth="6" strokeLinecap="round" />
          <path d="M150 856L166 854L182 872L180 884Q166 896 162 894L142 874Z" fill="#eab868" stroke="#b5762a" strokeWidth="3" />
          <path d="M158 858L178 880M152 864L170 886" stroke="#b5762a" strokeWidth="2" />
        </SmallIcon>
      </div>
      <div className="flex w-[49.2px] justify-center">
        <SmallIcon x={258.6}>
          <path d="M292 838V826H340V872M292 838H279V889H330V838H292" stroke="#999" strokeWidth="4" />
          <path d="M266 870V900H304" stroke="#aaa" strokeWidth="5" />
          <path d="M303 850V872Q309 880 318 872V824Q312 812 305 824" stroke="#50729a" strokeWidth="5" />
          <PlusBadge x={313} y={874} s={35} />
        </SmallIcon>
      </div>
      <div className="flex w-[49.2px] justify-center">
        <SmallIcon x={406.2}>
          <path d="M413 864Q440 836 472 846Q488 852 499 868Q476 892 444 890Q422 884 413 864Z" fill="#fff" stroke="#9c9c94" strokeWidth="4" />
          <circle cx="453" cy="862" r="20" fill="#5f8cbf" />
          <circle cx="453" cy="862" r="20" stroke="#8fb2da" strokeWidth="4" />
          <circle cx="453" cy="860" r="8" fill="#16202c" />
          <circle cx="449" cy="856" r="3" fill="#fff" />
          <path d="M411 843Q450 824 494 845" stroke="#9c9c94" strokeWidth="4" />
          <path d="M479 895H512L495 911Z" fill="#5e5e5e" />
        </SmallIcon>
      </div>
      <div className="flex w-[49.2px] justify-center">
        <SmallIcon x={553.8}>
          <path d="M563 834H639L610 866V906L593 894V866Z" fill="#76a0cc" stroke="#4b6f96" strokeWidth="4" strokeLinejoin="round" />
          <rect x="563" y="819" width="76" height="15" fill="#fce94f" stroke="#9b8a3a" strokeWidth="3" />
        </SmallIcon>
      </div>
      <div className="flex w-[49.2px] justify-center">
        <SmallIcon x={701.4}>
          <text x="710" y="874" fontSize="116" style={{ fontFamily: '"Liberation Serif", serif' }} fill="#c9c9c9">ε</text>
          <path d="M755 892V868H794V892" stroke="#d3d3d3" strokeWidth="4" />
          <path d="M755 882L767 890V906H757ZM794 882L782 890V906H792Z" fill="#d3d3d3" stroke="#d3d3d3" strokeWidth="4" />
        </SmallIcon>
      </div>
      <div className="flex w-[24px] pl-[3px]">
        <svg viewBox="0 0 15 8" className="h-2 w-[15px]"><path d="M0 0H15L7.5 8Z" fill="#666" /></svg>
      </div>
      <div className="flex w-[49.2px] justify-center">
        <SmallIcon x={921}>
          <path d="M926 828H1008M934 828V895H948M934 852H948" stroke="#9c9c9c" strokeWidth="4" />
          <rect x="950" y="845" width="14" height="14" fill="#ffe9c0" stroke="#fb9a16" strokeWidth="5" />
          <rect x="950" y="880" width="14" height="14" fill="#ffe9c0" stroke="#fb9a16" strokeWidth="5" />
          <path d="M974 823H995V868H1011L985 898L958 868H974Z" fill="#76a0cc" stroke="#4a6e94" strokeWidth="4" />
        </SmallIcon>
      </div>
      <div className="flex w-[49.2px] justify-center">
        <SmallIcon x={1068.6}>
          <path d="M1074 828H1156M1082 828V895H1096M1082 852H1096" stroke="#9c9c9c" strokeWidth="4" />
          <rect x="1098" y="845" width="14" height="14" fill="#ffe9c0" stroke="#fb9a16" strokeWidth="5" />
          <rect x="1098" y="880" width="14" height="14" fill="#ffe9c0" stroke="#fb9a16" strokeWidth="5" />
          <path d="M1122 893H1142V848H1158L1132 818L1106 848H1122Z" fill="#76a0cc" stroke="#4a6e94" strokeWidth="4" />
        </SmallIcon>
      </div>
      <div className="flex w-[49.2px] justify-center">
        <SmallIcon x={1216.2}>
          <rect x="1222" y="823" width="67" height="65" fill="#f2f2f2" stroke="#9a9a98" strokeWidth="4" />
          <rect x="1267" y="873" width="36" height="30" rx="5" fill="#ee5a5a" />
          <path d="M1275 888H1295" stroke="#fff" strokeWidth="6" strokeLinecap="round" />
        </SmallIcon>
      </div>
    </div>
  );
}

function LayersPanel() {
  return (
    <div className="flex w-[575.5px] shrink-0 bg-[#eeeeee]">
      <div className="flex w-[563px] flex-col">
        <div className="flex h-[46px] items-center justify-between pr-[3px] pl-[8px]">
          <span className="mb-[7px] text-[21px] tracking-[0.1px] text-[#262626]">Layers</span>
          <div className="mb-[6px] flex gap-[6px]">
            <svg viewBox="0 0 22 22" className="h-[22px] w-[22px]" fill="none" stroke="#76736c">
              <rect x="1" y="1" width="20" height="20" rx="4" strokeWidth="1.8" />
              <path d="M9 8V5H17V13H14" strokeWidth="1.8" />
              <rect x="5" y="8.5" width="8.5" height="8" rx="1.5" strokeWidth="1.8" />
            </svg>
            <svg viewBox="0 0 22 22" className="h-[22px] w-[22px]" fill="none" stroke="#76736c">
              <rect x="1" y="1" width="20" height="20" rx="4" strokeWidth="1.8" />
              <path d="M5.5 5.5L16.5 16.5M16.5 5.5L5.5 16.5" strokeWidth="3.8" />
            </svg>
          </div>
        </div>
        <LayerTools />
        <div className="mt-[9px] grow border border-t-2 border-[#cfcfcf] bg-white pt-[170px] pl-[9px] text-center font-['Liberation_Sans',sans-serif] text-[75px] leading-[72.1px] whitespace-pre text-[#00989f]">
          <div className="tracking-[0.6px]">From this</div>
          <div className="tracking-[-0.2px]">panel, you can</div>
          <div className="tracking-[1.1px]">decide which</div>
          <div className="tracking-[1.4px]">layers to turn</div>
          <div className="tracking-[0.6px]">on and off and</div>
          <div className="tracking-[1.1px]">in what order</div>
          <div className="tracking-[1.8px]">they will be</div>
          <div className="tracking-[1.5px]">stacked. </div>
        </div>
      </div>
      <div className="flex grow items-center justify-center pt-[10px]">
        <svg viewBox="0 0 6 32" className="h-8 w-[6px]" fill="#c0c0c0">
          {[0, 5, 10, 15, 20, 25, 30].map((r) => (
            <rect key={r} x={r % 10 === 0 ? 0 : 3.5} y={r} width="1.6" height="1.6" />
          ))}
        </svg>
      </div>
    </div>
  );
}

/* ---------- status bar ---------- */

function Spinner({ value, cls }: { value: string; cls: string }) {
  return (
    <div className={`flex overflow-hidden rounded-[6px] border-2 border-[#b5b5b5] bg-white ${cls}`}>
      <div className="flex grow items-center pt-px pl-[8px]">{value}</div>
      <div className="flex w-[29px] flex-col items-center justify-center gap-[10px] border-l-2 border-[#b5b5b5] bg-linear-to-b from-white to-[#efefef]">
        <svg viewBox="0 0 16 8" className="h-2 w-4"><path d="M0 8H16L8 0Z" fill="#666" /></svg>
        <svg viewBox="0 0 16 8" className="h-2 w-4"><path d="M0 0H16L8 8Z" fill="#666" /></svg>
      </div>
    </div>
  );
}

function StatusBar() {
  return (
    <div className="flex h-[60px] shrink-0 items-center border-t-2 border-[#d6d6d6] bg-[#eeeeee] pl-[8px] text-[22px] text-[#0f0f0f]">
      <div className="flex h-[46px] w-[424px] shrink-0 items-center rounded-[5px] border-2 border-[#b3b3b3] bg-white pl-[15px] text-[24px] text-[#8a8a8a]">
        <svg viewBox="0 0 24 24" className="mr-[16px] h-6 w-6" fill="none" stroke="#999">
          <circle cx="9.5" cy="9.5" r="8.5" strokeWidth="2" />
          <path d="M16 16L23 22.5" strokeWidth="3" />
        </svg>
        <span className="pt-px tracking-[0.45px]">Type to locate (⌘K)</span>
      </div>
      <span className="ml-[482px] w-[119px] shrink-0 pt-px tracking-[-0.15px]">Coordinate</span>
      <div className="flex h-[42px] w-[188px] shrink-0 items-center justify-center rounded-[5px] border-2 border-[#b5b5b5] bg-white pt-px tracking-[0.7px]">-0.242,0.825</div>
      <svg viewBox="0 0 30 32" className="ml-[9px] mb-[2px] h-8 w-[30px] shrink-0" fill="none" stroke="#111">
        <ellipse cx="20" cy="25" rx="9" ry="7" fill="#d6c4c4" stroke="none" />
        <path d="M2 8Q1 2 8 2L14 4L21 16Q27 18 25 27Q20 34 11 30L8 24L10 18Z" fill="#fff" strokeWidth="2" />
        <path d="M3 8L9 17Q14 20 19 15L11 3M6 5L12 15M9 4L15 14" strokeWidth="2.6" />
        <circle cx="17" cy="24" r="3" strokeWidth="2" />
        <path d="M19 6h2M23 5h2M26 2h2M1 21h2M4 18h2" strokeWidth="2" />
      </svg>
      <span className="ml-[27px] w-[63px] shrink-0">Scale</span>
      <div className="flex h-[46px] w-[182px] shrink-0 overflow-hidden rounded-[6px] border-2 border-[#b5b5b5] bg-white">
        <span className="flex grow items-center pt-px pl-[6px]">1:1403752</span>
        <div className="flex w-[40px] items-center justify-center border-l border-[#b5b5b5] bg-linear-to-b from-white to-[#eeeeee]">
          <svg viewBox="0 0 15 8" className="h-2 w-[15px]"><path d="M0 0H15L7.5 8Z" fill="#666" /></svg>
        </div>
      </div>
      <svg viewBox="0 0 25 30" className="ml-[23px] h-[30px] w-[25px] shrink-0" fill="none">
        <path d="M4 16V10Q4 2 12.500 2Q21 2 21 10V16" stroke="#9b9b9b" strokeWidth="3.600" />
        <path d="M4 16V10Q4 2 12.500 2Q21 2 21 10V16" stroke="#dcdcdc" strokeWidth="1.200" />
        <rect x="0" y="14" width="24.500" height="16" rx="2" fill="#727272" />
      </svg>
      <span className="ml-[18px] w-[103px] shrink-0 pt-px tracking-[-0.15px]">Magnifier</span>
      <Spinner value="100%" cls="h-[45px] w-[191px] shrink-0" />
      <span className="ml-[18px] w-[104px] shrink-0 pt-px">Rotation</span>
      <Spinner value="0.0 °" cls="h-[43px] w-[182px] shrink-0" />
      <div className="ml-[12px] flex h-[28px] w-[28px] shrink-0 items-center justify-center border-2 border-[#bfbfbf] bg-white">
        <svg viewBox="0 0 20 22" className="h-[22px] w-5" fill="none"><path d="M3 12L8 18L16 3" stroke="#1e1e1e" strokeWidth="3.2" strokeLinecap="round" /></svg>
      </div>
      <span className="ml-[10px] w-[103px] shrink-0 pt-px tracking-[-0.1px] text-[#262626]">Render</span>
      <svg viewBox="0 0 33 30" className="h-[30px] w-[33px] shrink-0" fill="none" stroke="#7c7c7c">
        <path d="M10 1H22L31 13H1Z" fill="#d0d0d0" strokeWidth="2" strokeLinejoin="round" />
        <path d="M11 1L7 13M16 1V28M21 1L25 13M6 7H26" strokeWidth="1.8" />
        <path d="M4 14Q4 28 16 28Q28 28 28 14M5 19H27M9 25H23M10 14Q10 22 16 28M22 14Q22 22 16 28M1 14H32" strokeWidth="1.8" />
      </svg>
      <span className="ml-[2px] w-[166px] shrink-0 pt-px text-[#262626]">EPSG:4326</span>
      <svg viewBox="0 0 33 31" className="h-[31px] w-[33px] shrink-0" fill="#757575">
        <path d="M16 0C25 0 32 6 32 13.500C32 18 29.500 22 26 24Q26 28 30 30.500Q22 31 19 26.500Q17.500 27 16 27C7 27 0 21 0 13.500C0 6 7 0 16 0Z" />
      </svg>
      <svg viewBox="0 0 20 20" className="mt-[32px] ml-[33px] h-5 w-5 shrink-0" fill="#b9b9b9">
        <path d="M0 18h2v2h-2zM6 18h2v2h-2zM12 18h2v2h-2zM6 12h2v2h-2zM12 12h2v2h-2zM18 12h2v2h-2zM12 6h2v2h-2zM18 6h2v2h-2zM18 0h2v2h-2z" />
      </svg>
    </div>
  );
}

/* ---------- window ---------- */

const upper = "border-b-2 border-[#bfbfbf]";
const lower = "border-b-2 border-[#bcbcbc]";

export default function App() {
  return (
    <div className="h-[2146px] w-[2684px] overflow-hidden bg-[#cfcfcf] pt-[12px] pl-[22px] font-['Inter',sans-serif]">
      <div className="flex h-[2109px] w-[2640.500px] flex-col overflow-hidden rounded-[20px] bg-[#eeeeee] shadow-[0_0_2px_1px_rgba(0,0,0,0.25),0_34px_56px_rgba(0,0,0,0.38)]">
        <div className="flex h-[56px] shrink-0 items-center border-b border-[#cfcfcf] bg-[#fbfbfb]">
          <div className="flex w-[240px] gap-[15.5px] pl-[15px]">
            <div className="h-6 w-6 rounded-full border border-[#ec5750] bg-[#ff5f5a]" />
            <div className="h-6 w-6 rounded-full border border-[#eda837] bg-[#fdb93f]" />
            <div className="h-6 w-6 rounded-full border border-[#2bb741] bg-[#33c748]" />
          </div>
          <div className="mb-[2px] grow text-center text-[25.5px] font-bold tracking-[0.42px] text-[#4d4d4d]">Untitled Project - QGIS</div>
          <div className="w-[240px]" />
        </div>
        <div className="flex h-[75px] shrink-0 border-b border-[#f8f8f8] bg-[#f2f2f2]">
          <Group edge={upper}><FileGroup /></Group>
          <Group edge={upper}><NavGroup /></Group>
          <Group edge={upper} last><AttributeGroup /></Group>
        </div>
        <div className="flex h-[76px] shrink-0 bg-[#f2f2f2]">
          <Group edge={lower}><LayerGroup /></Group>
          <Group edge={lower}><EditGroup /></Group>
          <Group edge={lower}><LabelGroup /></Group>
          <Group edge={lower}><SearchGroup /></Group>
          <Group edge={lower}><PythonGroup /></Group>
          <Group edge={lower}><HelpGroup /></Group>
          <Group edge={lower} last><Grip /></Group>
        </div>
        <div className="flex min-h-0 grow">
          <LayersPanel />
          <div className="mt-px mr-[2px] grow border-t border-l border-[#c6c6c6] bg-white pt-[751px] pr-[141px] text-center font-['Liberation_Sans',sans-serif] text-[79px] leading-[76.5px] text-[#00989f]">
            <div className="tracking-[0.5px]">This is where your map</div>
            <div className="tracking-[1.9px]">visualization will go!</div>
          </div>
        </div>
        <StatusBar />
      </div>
    </div>
  );
}
